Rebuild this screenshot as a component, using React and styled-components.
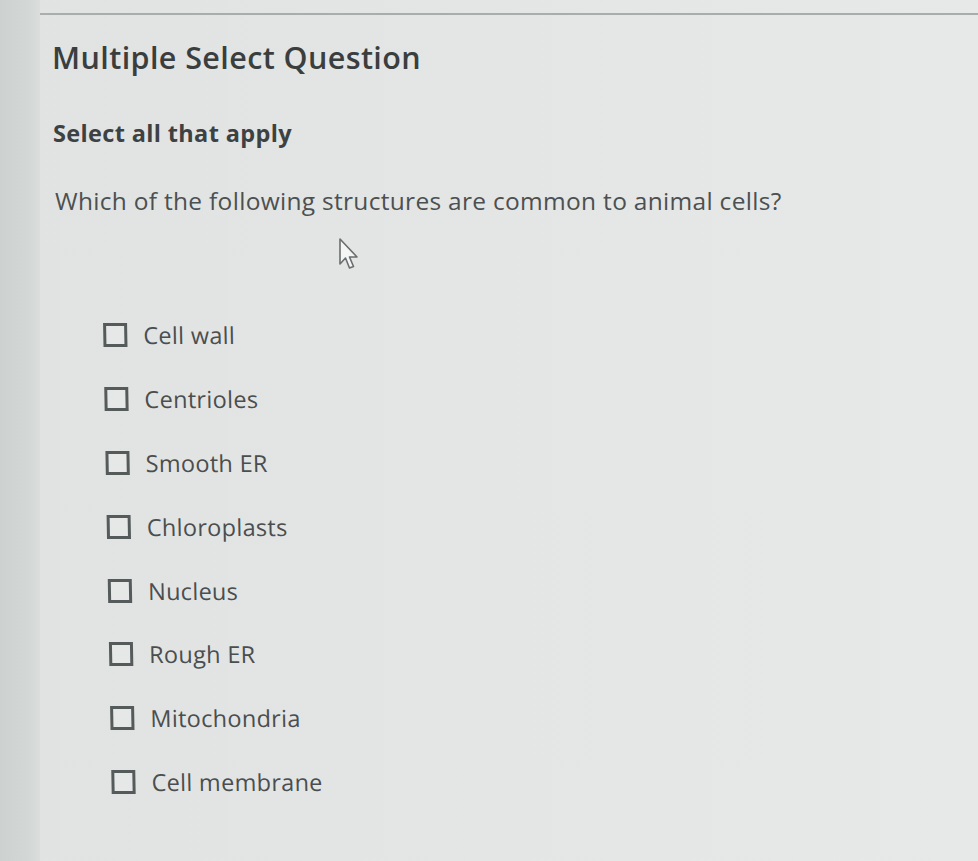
import styled, { createGlobalStyle } from 'styled-components';

const options = [
    'Cell wall',
    'Centrioles',
    'Smooth ER',
    'Chloroplasts',
    'Nucleus',
    'Rough ER',
    'Mitochondria',
    'Cell membrane',
];

export default function App() {
    return (
        <>
            <GlobalStyle />
            <StyledPage>
                <SideStrip />
                <Main>
                    <Title>Multiple Select Question</Title>
                    <Instruction>Select all that apply</Instruction>
                    <Prompt>Which of the following structures are common to animal cells?</Prompt>
                    <Cursor width="22" height="36" viewBox="0 0 22 36">
                        <path
                            d="M2 2 L2 27 L7.5 21 L11.5 31 L15.5 29.5 L11.5 20 L19 20 Z"
                            fill="#f4f5f5"
                            stroke="#6a6e6f"
                            strokeWidth="1.6"
                            strokeLinejoin="round"
                        />
                    </Cursor>
                    <OptionList>
                        {options.map((label) => (
                            <OptionRow key={label}>
                                <Box />
                                <OptionLabel>{label}</OptionLabel>
                            </OptionRow>
                        ))}
                    </OptionList>
                </Main>
            </StyledPage>
        </>
    );
}

const GlobalStyle = createGlobalStyle`
    html, body {
        margin: 0;
        padding: 0;
        background: #e3e5e4;
    }
    body {
        font-family: "Open Sans", "Noto Sans", sans-serif;
    }
`;

const StyledPage = styled.div`
    display: flex;
    min-height: 861px;
    background: linear-gradient(90deg, #e1e3e2 0%, #e4e6e5 50%, #e7e8e8 100%);
    overflow: hidden;
`;

const SideStrip = styled.div`
    width: 40px;
    flex-shrink: 0;
    background: linear-gradient(90deg, #cdd2d1 0%, #d3d7d6 70%, #dadddc 100%);
`;

const Main = styled.main`
    position: relative;
    flex: 1;
    margin-top: 13px;
    border-top: 2px solid #a9adac;
    padding-left: 12px;
    display: flex;
    flex-direction: column;
    align-items: flex-start;
`;

const Title = styled.h1`
    margin: 24px 0 0;
    font-size: 30.5px;
    line-height: 36px;
    font-weight: 600;
    color: #3b3e3f;
    letter-spacing: 0.4px;
`;

const Instruction = styled.h2`
    margin: 43px 0 0 1px;
    font-size: 23.5px;
    line-height: 30px;
    font-weight: 700;
    color: #3e4142;
    letter-spacing: 0.35px;
`;

const Prompt = styled.p`
    margin: 38px 0 0 3px;
    font-size: 24.5px;
    line-height: 30px;
    font-weight: 400;
    color: #4c5051;
    letter-spacing: 0.3px;
`;

const Cursor = styled.svg`
    position: absolute;
    left: 298px;
    top: 222px;
`;

const OptionList = styled.ul`
    list-style: none;
    margin: 104px 0 0;
    padding: 0 0 0 51px;
    display: flex;
    flex-direction: column;
    gap: 33.9px;
    transform: skewX(1.05deg);
    transform-origin: top left;
`;

const OptionRow = styled.li`
    display: flex;
    align-items: center;
    gap: 16px;
    height: 30px;
`;

const Box = styled.span`
    width: 18px;
    height: 18px;
    border: 3px solid #555a5b;
    background: #e6e8e8;
    flex-shrink: 0;
`;

const OptionLabel = styled.span`
    font-size: 23.5px;
    color: #4a4e4f;
    letter-spacing: 0.3px;
`;
